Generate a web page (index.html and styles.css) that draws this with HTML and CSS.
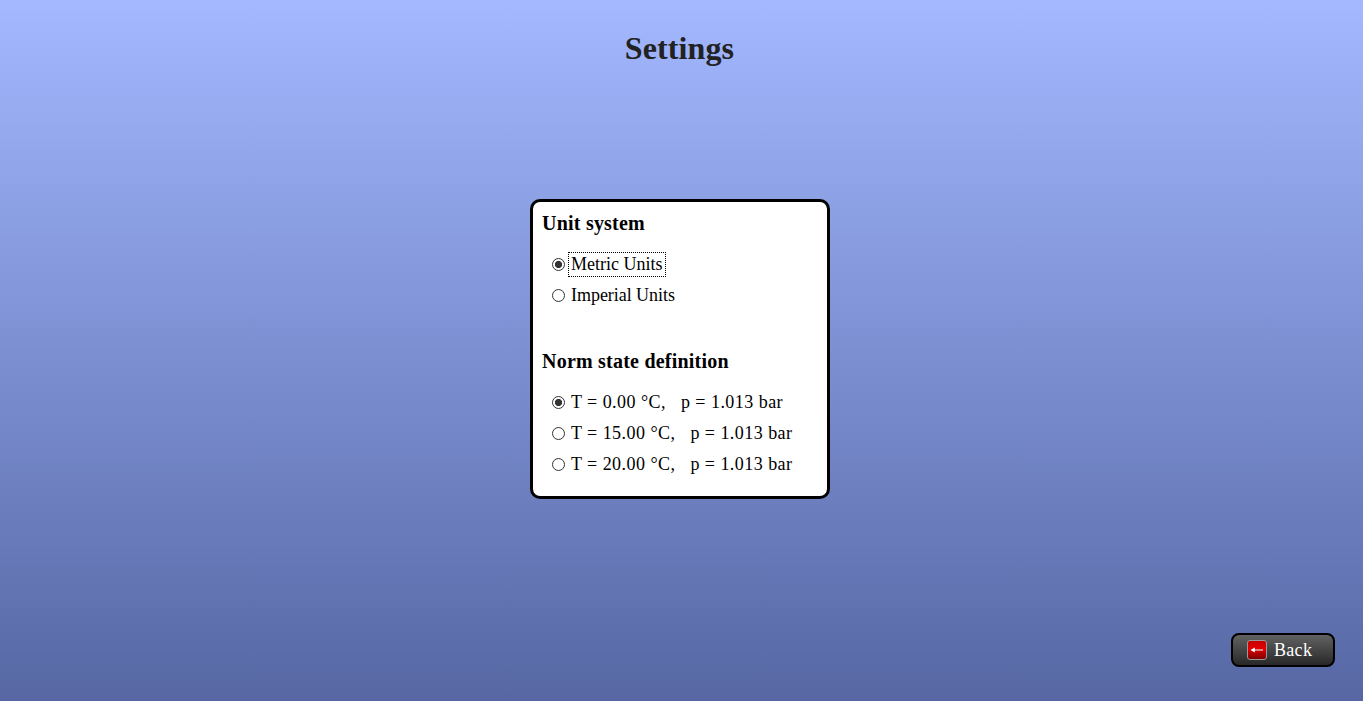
FILE: index.html
```html
<!DOCTYPE html>
<html lang="en">
<head>
<meta charset="utf-8">
<title>Settings</title>
<link rel="stylesheet" href="styles.css">
</head>
<body>
<h1 class="title">Settings</h1>
<main class="panel">
  <h2 class="heading">Unit system</h2>
  <div class="options">
    <label class="option"><input class="radio" type="radio" name="unit" checked><span class="label focused">Metric Units</span></label>
    <label class="option"><input class="radio" type="radio" name="unit"><span class="label imperial">Imperial Units</span></label>
  </div>
  <h2 class="heading norm">Norm state definition</h2>
  <div class="options">
    <label class="option"><input class="radio" type="radio" name="norm" checked><span class="label state">T = 0.00 °C, &nbsp; p = 1.013 bar</span></label>
    <label class="option"><input class="radio" type="radio" name="norm"><span class="label state">T = 15.00 °C, &nbsp; p = 1.013 bar</span></label>
    <label class="option"><input class="radio" type="radio" name="norm"><span class="label state">T = 20.00 °C, &nbsp; p = 1.013 bar</span></label>
  </div>
</main>
<footer class="footer">
  <button class="back" type="button">
    <svg class="back-icon" width="20" height="20" viewBox="0 0 20 20">
      <defs>
        <linearGradient id="red" x1="0" y1="0" x2="0" y2="1">
          <stop offset="0" stop-color="#c40000"/>
          <stop offset=".45" stop-color="#e40000"/>
          <stop offset=".65" stop-color="#b80000"/>
          <stop offset="1" stop-color="#780000"/>
        </linearGradient>
      </defs>
      <rect x=".5" y=".5" width="19" height="19" rx="2.5" fill="url(#red)" stroke="#999"/>
      <path d="M6 10H16" stroke="#dfb0b0" stroke-width="1.5"/>
      <path d="M3.5 10L7.8 7.6V12.4Z" fill="#fff"/>
    </svg>
    <span class="back-text">Back</span>
  </button>
</footer>
</body>
</html>
```
FILE: styles.css
```css
* { box-sizing: border-box; }
body {
  margin: 0;
  height: 701px;
  display: flex;
  flex-direction: column;
  align-items: center;
  overflow: hidden;
  background: linear-gradient(#a3b8ff, #5667a4);
  font: 18px/21px "Liberation Serif", "Times New Roman", serif;
  color: #000;
}
.title {
  margin: 30px 4px 0 0;
  height: 36px;
  font-size: 32px;
  line-height: 36px;
  color: #222;
  letter-spacing: 0.1px;
}
.panel {
  width: 300px;
  height: 300px;
  margin: 133px 3px 0 0;
  padding: 9px;
  border: 3px solid #000;
  border-radius: 10px;
  background: #fff;
}
.heading {
  margin: 0 0 17px;
  font-size: 20px;
  line-height: 24px;
  letter-spacing: 0.22px;
}
.norm { margin-top: 41px; }
.options {
  display: flex;
  flex-direction: column;
  gap: 6px;
  padding-left: 10px;
}
.option {
  display: flex;
  align-items: center;
  height: 25px;
}
.radio {
  appearance: none;
  flex: none;
  width: 13px;
  height: 13px;
  margin: 0 3px 0 0;
  border: 1px solid #333;
  border-radius: 50%;
  background: #fff;
}
.radio:checked { background: radial-gradient(circle, #333 3.2px, #fff 4px); }
.label {
  height: 25px;
  padding: 1px 2px;
  border: 1px solid transparent;
  white-space: nowrap;
}
.focused { border: 1px dotted #000; }
.imperial { letter-spacing: -0.04px; }
.state { letter-spacing: 0.46px; }
.footer {
  align-self: flex-end;
  margin: 134px 28px 0 0;
}
.back {
  display: flex;
  align-items: center;
  gap: 7px;
  width: 104px;
  height: 34px;
  padding: 0 0 0 14px;
  border: 2px solid #000;
  border-radius: 8px;
  background: linear-gradient(#626262, #282828);
  color: #fff;
  font: inherit;
}
.back-text { letter-spacing: 0.3px; }
```
